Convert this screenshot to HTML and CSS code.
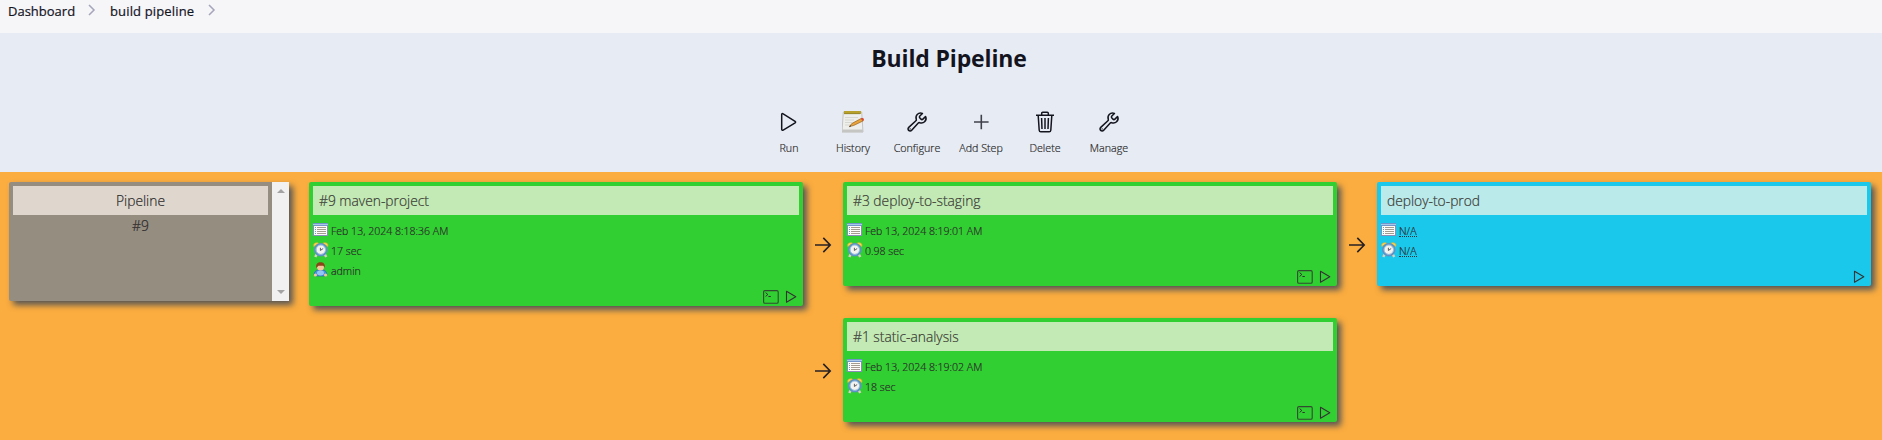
FILE: index.html
```html
<!DOCTYPE html>
<html lang="en">
<head>
<meta charset="utf-8">
<title>Build Pipeline</title>
<link rel="stylesheet" href="styles.css">
</head>
<body>
<svg class="defs" width="0" height="0">
  <defs>
    <symbol id="chevron" viewBox="0 0 8 12"><path d="M1 1l5 5-5 5" fill="none" stroke="#a5a5bb" stroke-width="1.5"/></symbol>
    <symbol id="wrench" viewBox="0 0 512 512"><path d="M393.87 190a32.1 32.1 0 01-45.25 0l-26.57-26.57a32.09 32.09 0 010-45.26L382.19 58a1 1 0 00-.3-1.64c-38.82-16.64-89.15-8.16-121.11 23.57-30.58 30.35-32.32 76-21.12 115.84a31.93 31.93 0 01-9.06 32.08L64 380a48.17 48.17 0 1068 68l153.86-167a31.93 31.93 0 0131.6-9.13c39.54 10.59 84.54 8.6 114.72-21.19 32.49-32 39.5-88.56 23.75-120.93a1 1 0 00-1.6-.26z" fill="none" stroke="#14141f" stroke-linecap="round" stroke-miterlimit="10" stroke-width="36"/><circle cx="96" cy="416" r="16" fill="#14141f"/></symbol>
    <symbol id="list" viewBox="0 0 16 16">
      <rect x=".5" y="1.5" width="14" height="12" fill="#fdfcf8" stroke="#8a8db8"/>
      <path d="M0 1h15v3H0z" fill="#7195cb"/><path d="M0 2.5h15" stroke="#a9c8e8"/>
      <path d="M4 5.5h9M4 7.5h9M4 9.5h9M4 11.5h9" stroke="#a49b91"/>
      <path d="M2 5.5h1M2 7.5h1M2 9.5h1M2 11.5h1" stroke="#619cdb"/>
    </symbol>
    <symbol id="clock" viewBox="0 0 16 16">
      <path d="M3.8 12L2.3 15M11.7 12l1.5 3" stroke="#d9d2c2" stroke-width="2.4"/>
      <path d="M.8 4.5C0 1 3 .2 5.8 1.3zM14.8 4.5C15.6 1 12.6.2 9.8 1.3z" fill="#fbd750" stroke="#e3ae32" stroke-width=".7"/>
      <circle cx="7.8" cy="7.7" r="5.6" fill="#f3f3ef" stroke="#5c93c6" stroke-width="2.4"/>
      <circle cx="7.8" cy="7.7" r="4.7" fill="none" stroke="#b5cfe5" stroke-width=".8"/>
      <path d="M7.4 5.8v2.7l2.8-2" fill="none" stroke="#5b6063" stroke-width="1"/>
    </symbol>
    <symbol id="person" viewBox="0 0 16 16">
      <path d="M1 13c0-3 2-5 4-5h5c2 0 4 2 4 5l-2 1H3z" fill="#4a91de" stroke="#2464b1" stroke-width=".7"/>
      <ellipse cx="7.5" cy="11" rx="3.5" ry="2.4" fill="#91c7f5"/>
      <circle cx="2.4" cy="13" r="1.6" fill="#f3c39a"/><circle cx="12.6" cy="13" r="1.6" fill="#f3c39a"/>
      <circle cx="7.5" cy="5" r="3.5" fill="#f6c79e"/>
      <path d="M3.3 6C2.5 1.5 5 .2 7.5 .2s5 1.2 4.2 5.6L10.3 3.8H5.5z" fill="#8b4317"/>
    </symbol>
    <symbol id="console" viewBox="0 0 16 14"><rect x=".6" y=".6" width="14.6" height="12.7" rx="1.3" fill="none" stroke="#333" stroke-opacity=".85" stroke-width="1.1"/><path d="M2.6 2.6l2.3 1.9-2.3 1.9M5.4 6.5h2.4" fill="none" stroke="#333" stroke-width="1"/></symbol>
    <symbol id="play" viewBox="0 0 12 14"><path d="M1.5 1.3v11l9.3-5.5z" fill="none" stroke="#333" stroke-width="1.1" stroke-linejoin="round"/></symbol>
    <symbol id="arrow" viewBox="0 0 18 18"><path d="M1 9h15M9.3 1.9L16.2 9l-6.9 7.1" fill="none" stroke="#252025" stroke-width="1.6"/></symbol>
  </defs>
</svg>

<nav class="breadcrumbs">
  <span class="crumb-home">Dashboard</span><svg class="chevron"><use href="#chevron"/></svg>
  <span class="crumb-job">build pipeline</span><svg class="chevron"><use href="#chevron"/></svg>
</nav>

<header class="header">
  <h1>Build Pipeline</h1>
  <div class="actions">
    <a class="action"><svg viewBox="0 0 22 22"><path d="M3.7 3.5v14.8c0 .9.7 1.2 1.5.8l11.9-7.2c.7-.5.7-1.1 0-1.6L5.2 2.8c-.8-.4-1.5-.1-1.5.7z" fill="none" stroke="#14141f" stroke-width="1.5"/></svg><span>Run</span></a>
    <a class="action"><svg viewBox="0 0 22 22">
      <path d="M1.3 1h18.4l1.3 20H0z" fill="#eeeeec" stroke="#b9b9b5" stroke-width=".8"/>
      <path d="M.2 18.5h20.6v2.7H0z" fill="#c5c5c3"/>
      <path d="M2 0h17v3H2z" fill="#b7a02c"/><path d="M2.5 2.7h16" stroke="#766b25" stroke-dasharray="1 1"/>
      <path d="M3 6.5h13M3 9h9M3 11.5h7M3 14h5" stroke="#cfcfcc" stroke-width=".8"/>
      <path d="M7.5 15.5l2.3-3L19.5 7.3l1.8 2.5-9.7 4.7z" fill="#e9a33a" stroke="#94601d" stroke-width=".7"/>
      <path d="M19.2 7.3c2-.9 3.3.7 2.5 2l-1.2.8-1.6-2.3z" fill="#d84b36"/><path d="M7 16.2l2-1-.8-1z" fill="#333"/>
    </svg><span>History</span></a>
    <a class="action"><svg><use href="#wrench"/></svg><span>Configure</span></a>
    <a class="action"><svg viewBox="0 0 22 22"><path d="M4 11h14.6M11.3 3.7v14.6" stroke="#40404b" stroke-width="1.6"/></svg><span>Add Step</span></a>
    <a class="action"><svg viewBox="0 0 22 22"><path d="M2 4.3h18M4.2 4.5l1 14.7c.1 1 .7 1.6 1.6 1.6h8.4c.9 0 1.5-.6 1.6-1.6l1-14.7M7.7 4V2.2c0-.6.4-1 1-1h4.6c.6 0 1 .4 1 1V4M11 7v11M7.6 7l.4 11M14.4 7L14 18" fill="none" stroke="#14141f" stroke-width="1.5"/></svg><span>Delete</span></a>
    <a class="action"><svg><use href="#wrench"/></svg><span>Manage</span></a>
  </div>
</header>

<main class="pipeline">
  <section class="revision">
    <div class="revision-body"><h2>Pipeline</h2><p>#9</p></div>
    <div class="scrollbar"><i class="up"></i><i class="down"></i></div>
  </section>

  <article class="card card-tall">
    <h3>#9 maven-project</h3>
    <ul>
      <li><svg><use href="#list"/></svg><span>Feb 13, 2024 8:18:36 AM</span></li>
      <li><svg><use href="#clock"/></svg><span>17 sec</span></li>
      <li><svg><use href="#person"/></svg><span>admin</span></li>
    </ul>
    <div class="tools"><svg class="console"><use href="#console"/></svg><svg class="play"><use href="#play"/></svg></div>
  </article>

  <div class="branches">
    <div class="branch">
      <svg class="arrow"><use href="#arrow"/></svg>
      <article class="card">
        <h3>#3 deploy-to-staging</h3>
        <ul>
          <li><svg><use href="#list"/></svg><span>Feb 13, 2024 8:19:01 AM</span></li>
          <li><svg><use href="#clock"/></svg><span>0.98 sec</span></li>
        </ul>
        <div class="tools"><svg class="console"><use href="#console"/></svg><svg class="play"><use href="#play"/></svg></div>
      </article>
      <svg class="arrow"><use href="#arrow"/></svg>
      <article class="card card-pending">
        <h3>deploy-to-prod</h3>
        <ul>
          <li><svg><use href="#list"/></svg><abbr>N/A</abbr></li>
          <li><svg><use href="#clock"/></svg><abbr>N/A</abbr></li>
        </ul>
        <div class="tools"><svg class="play"><use href="#play"/></svg></div>
      </article>
    </div>
    <div class="branch branch-last">
      <svg class="arrow"><use href="#arrow"/></svg>
      <article class="card">
        <h3>#1 static-analysis</h3>
        <ul>
          <li><svg><use href="#list"/></svg><span>Feb 13, 2024 8:19:02 AM</span></li>
          <li><svg><use href="#clock"/></svg><span>18 sec</span></li>
        </ul>
        <div class="tools"><svg class="console"><use href="#console"/></svg><svg class="play"><use href="#play"/></svg></div>
      </article>
    </div>
  </div>
</main>
</body>
</html>
```
FILE: styles.css
```css
* { box-sizing: border-box; }
body {
  margin: 0;
  height: 440px;
  overflow: hidden;
  display: flex;
  flex-direction: column;
  background: #fcad3f;
  color: #2b2b2b;
  font-family: "Open Sans", "Noto Sans", sans-serif;
}
h1, h2, h3, p, ul { margin: 0; padding: 0; }
svg { display: block; flex: none; }
.defs { position: absolute; }

.breadcrumbs {
  display: flex;
  height: 33px;
  padding-left: 8px;
  background: #f6f6f8;
  color: #14141f;
  font-size: 13px;
  line-height: 22px;
  white-space: nowrap;
}
.breadcrumbs span { -webkit-text-stroke: .2px; }
.crumb-home { width: 80px; }
.crumb-job { width: 98px; letter-spacing: .15px; }
.chevron { width: 8px; height: 12px; margin: 4px 14px 0 0; }

.header {
  height: 139px;
  padding-left: 16px;
  background: #e7ecf4;
  text-align: center;
}
h1 {
  padding-top: 7px;
  color: #14141f;
  font-size: 23px;
  font-weight: 700;
  line-height: 36px;
  letter-spacing: -.15px;
}
.actions { display: flex; justify-content: center; margin-top: 35px; }
.action {
  width: 64px;
  display: flex;
  flex-direction: column;
  align-items: center;
  font-size: 10.7px;
  font-weight: 300;
  line-height: 16px;
  white-space: nowrap;
  -webkit-text-stroke: .2px;
}
.action svg { width: 22px; height: 22px; margin-bottom: 7px; }

.pipeline {
  display: flex;
  align-items: flex-start;
  padding: 10px 0 0 9px;
  font-weight: 300;
  -webkit-text-stroke: .2px;
}
.revision {
  display: flex;
  width: 280px;
  height: 119px;
  margin-right: 20px;
  border-radius: 2px 0 0 2px;
  background: #968d81;
  box-shadow: 4px 4px 6px #555;
  text-align: center;
}
.revision-body { flex: 1; padding: 4px; font-size: 13.8px; }
.revision h2 {
  height: 29px;
  background: #dfd6cd;
  font-size: 13.8px;
  font-weight: 300;
  line-height: 30px;
}
.revision p { line-height: 22px; }
.scrollbar {
  width: 17px;
  padding: 7px 5px;
  display: flex;
  flex-direction: column;
  justify-content: space-between;
  background: #f1f1f1;
}
.scrollbar i { border: 4px solid transparent; border-top-width: 0; border-bottom-width: 0; }
.scrollbar .up { border-bottom: 4px solid #a3a3a3; }
.scrollbar .down { border-top: 4px solid #a3a3a3; }

.card {
  display: flex;
  flex-direction: column;
  width: 494px;
  height: 104px;
  padding: 4px;
  border-radius: 2px;
  background: #32cf32;
  box-shadow: 4px 4px 6px #555;
}
.card-tall { height: 124px; }
.card-pending { background: #1ac8ec; }
.card h3 {
  height: 29px;
  padding-left: 6px;
  background: #c3eab5;
  color: #3a3a34;
  font-size: 13.8px;
  font-weight: 300;
  line-height: 30px;
}
.card-pending h3 { background: #bbeaeb; }
.card ul { padding-top: 6px; list-style: none; font-size: 10.55px; line-height: 20px; }
.card li { display: flex; height: 20px; gap: 2px; }
.card li svg { width: 16px; height: 16px; margin-top: 1px; }
.card abbr {
  height: 16px;
  border-bottom: 1px dotted #333;
}
.tools {
  display: flex;
  justify-content: flex-end;
  gap: 6px;
  margin-top: auto;
  padding-right: 2px;
  height: 12px;
}
.console { width: 16px; height: 14px; }
.play { width: 12px; height: 14px; }

.branch { display: flex; align-items: flex-start; }
.branch-last { margin-top: 32px; }
.arrow { width: 18px; height: 18px; margin: 54px 11px 0; }
.branch-last .arrow { margin-top: 44px; }
```
